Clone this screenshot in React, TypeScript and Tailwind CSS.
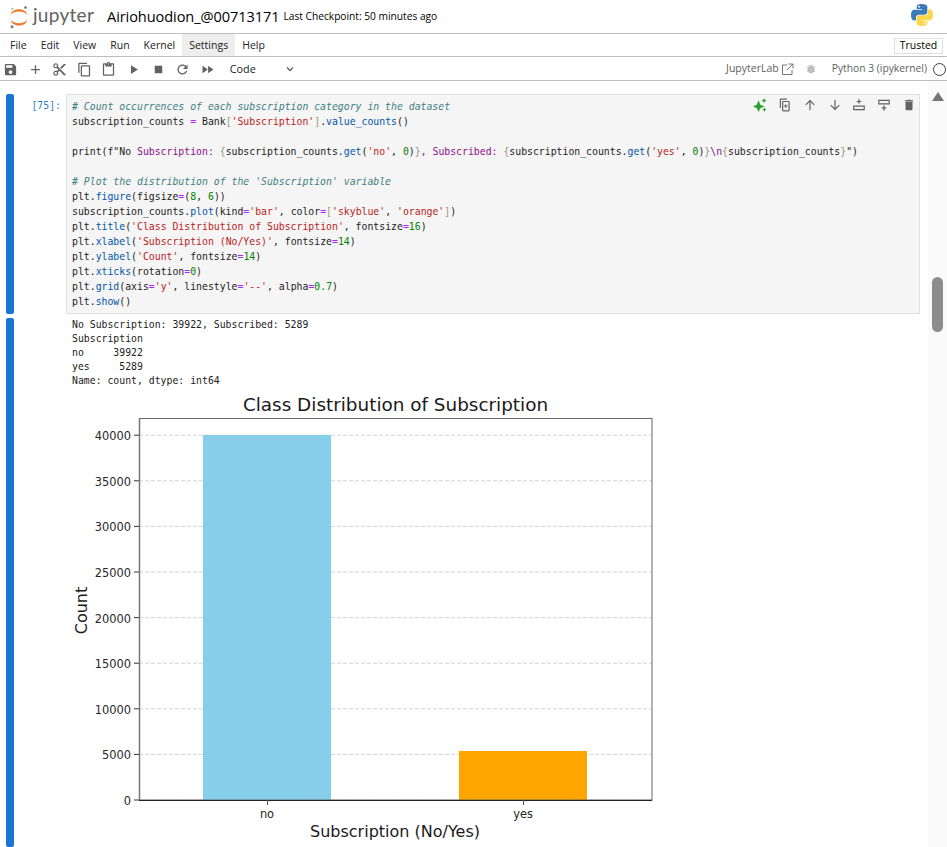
const UI_FONT = "font-['Open_Sans','Noto_Sans',sans-serif]";

const ICONS = {
  save: "M17 3H5a2 2 0 0 0-2 2v14a2 2 0 0 0 2 2h14c1.1 0 2-.9 2-2V7l-4-4zm-5 16c-1.66 0-3-1.34-3-3s1.34-3 3-3 3 1.34 3 3-1.34 3-3 3zm3-10H5V5h10v4z",
  add: "M19 13h-6v6h-2v-6H5v-2h6V5h2v6h6v2z",
  cut: "M9.64 7.64c.23-.5.36-1.05.36-1.64 0-2.21-1.79-4-4-4S2 3.79 2 6s1.79 4 4 4c.59 0 1.14-.13 1.64-.36L10 12l-2.36 2.36C7.14 14.13 6.59 14 6 14c-2.21 0-4 1.79-4 4s1.79 4 4 4 4-1.79 4-4c0-.59-.13-1.14-.36-1.64L12 14l7 7h3v-1L9.64 7.64zM6 8c-1.1 0-2-.89-2-2s.9-2 2-2 2 .89 2 2-.9 2-2 2zm0 12c-1.1 0-2-.89-2-2s.9-2 2-2 2 .89 2 2-.9 2-2 2zm6-7.5c-.28 0-.5-.22-.5-.5s.22-.5.5-.5.5.22.5.5-.22.5-.5.5zM19 3l-6 6 2 2 7-7V3h-3z",
  copy: "M16 1H4c-1.1 0-2 .9-2 2v14h2V3h12V1zm3 4H8c-1.1 0-2 .9-2 2v14c0 1.1.9 2 2 2h11c1.1 0 2-.9 2-2V7c0-1.1-.9-2-2-2zm0 16H8V7h11v14z",
  paste: "M19 2h-4.18C14.4.84 13.3 0 12 0c-1.3 0-2.4.84-2.82 2H5c-1.1 0-2 .9-2 2v16c0 1.1.9 2 2 2h14c1.1 0 2-.9 2-2V4c0-1.1-.9-2-2-2zm-7 0c.55 0 1 .45 1 1s-.45 1-1 1-1-.45-1-1 .45-1 1-1zm7 18H5V4h2v3h10V4h2v16z",
  run: "M8 5v14l11-7z",
  stop: "M6 6h12v12H6z",
  refresh: "M17.65 6.35C16.2 4.9 14.21 4 12 4c-4.42 0-7.99 3.58-7.99 8s3.57 8 7.99 8c3.73 0 6.84-2.55 7.73-6h-2.08c-.82 2.33-3.04 4-5.65 4-3.31 0-6-2.69-6-6s2.69-6 6-6c1.66 0 3.14.69 4.22 1.78L13 11h7V4l-2.35 2.35z",
  forward: "M4 18l8.5-6L4 6v12zm9-12v12l8.5-6L13 6z",
  sparkles: "M9.500 4l3 7.500L20 14.500l-7.500 3-3 6.500-3-6.500L0 14.500l6.500-3zM19 0l1.300 3.200L23.500 4.500l-3.200 1.300L19 9l-1.300-3.200L14.500 4.500l3.200-1.300zM19.500 16l1.200 2.800 2.800 1.200-2.800 1.200-1.200 2.800-1.200-2.800-2.800-1.200 2.800-1.200z",
  dup: "M15 1H5a2 2 0 0 0-2 2v14h2V3h10V1zm3 4H9a2 2 0 0 0-2 2v14a2 2 0 0 0 2 2h9a2 2 0 0 0 2-2V7a2 2 0 0 0-2-2zm0 16H9V7h9v14zm-3.500-8H14v-2.500h-1.500V13H10v1.500h2.500V17H14v-2.500h2.500V13z",
  up: "M12 3l8 8-1.400 1.400-5.600-5.600V21h-2V6.800l-5.600 5.600L4 11z",
  down: "M12 21l-8-8 1.400-1.400 5.600 5.600V3h2v14.200l5.600-5.600L20 13z",
  insertAbove: "M11 2h2v3h3v2h-3v3h-2V7H8V5h3zM2 13h20v8H2zM4 15v4h16v-4z",
  insertBelow: "M2 3h20v8H2zM4 5v4h16V5zM11 13h2v3h3v2h-3v4h-2v-4H8v-2h3z",
  trash: "M6 19a2 2 0 0 0 2 2h8a2 2 0 0 0 2-2V7H6v12zM19 4h-3.500l-1-1h-5l-1 1H5v2h14V4z",
};

const Icon = ({ d, size = 14, color = "#616161" }: { d: string; size?: number; color?: string }) => (
  <svg width={size} height={size} viewBox="0 0 24 24" fill={color} fillRule="evenodd" className="shrink-0">
    <path d={d} />
  </svg>
);

const JupyterMark = () => (
  <svg width="20" height="24" viewBox="0 0 20 24" className="shrink-0">
    <path d="M1.500 10.200C3 5.600 6.200 4.200 10 4.200s7 1.400 8.500 6C16.500 7.600 13.500 6.600 10 6.600S3.500 7.600 1.500 10.200z" fill="#f37726" />
    <path d="M1.500 14.600C3 19.200 6.200 20.600 10 20.600s7-1.400 8.500-6c-2 2.600-5 3.600-8.500 3.600s-6.500-1-8.500-3.600z" fill="#f37726" />
    <circle cx="16.500" cy="2.600" r="1.300" fill="#767677" />
    <circle cx="3" cy="21.800" r="1.500" fill="#767677" />
    <circle cx="3.400" cy="3.600" r="0.900" fill="#989798" />
  </svg>
);

const PYTHON_SNAKE =
  "M54.900 0C26.800 0 28.600 12.200 28.600 12.200v12.600h26.800v3.800H17.900S0 26.600 0 54.900c0 28.300 15.600 27.300 15.600 27.300h9.300V69.100s-.5-15.600 15.400-15.600h26.500s14.900.2 14.900-14.400V14.900S84 0 54.900 0zM40.100 8.500a4.800 4.800 0 1 1 0 9.600 4.800 4.800 0 0 1 0-9.600z";

const PythonLogo = () => (
  <svg width="22" height="22" viewBox="0 0 110 110" className="shrink-0">
    <path d={PYTHON_SNAKE} fill="#3b7cb8" />
    <path transform="rotate(180 55 55)" d={PYTHON_SNAKE} fill="#fdd64a" />
  </svg>
);

const Header = () => (
  <div className="flex items-center h-[34px] pl-[9px] pr-[14px] border-b border-[#bdbdbd]">
    <JupyterMark />
    <span className="ml-[4px] w-[74px] text-[19px] leading-none text-[#616161] font-['Lato',sans-serif] tracking-[0.3px] -mt-[5px]">
      jupyter
    </span>
    <span className="text-[14.600px] tracking-[-0.1px] text-black mt-[1px] whitespace-nowrap">Airiohuodion_@00713171</span>
    <span className="text-[10.200px] text-black ml-[4px] mt-[1px] whitespace-nowrap">Last Checkpoint: 50 minutes ago</span>
    <div className="ml-auto -mt-[4px]">
      <PythonLogo />
    </div>
  </div>
);

const MENU = ["File", "Edit", "View", "Run", "Kernel", "Settings", "Help"];

const MenuBar = () => (
  <div className="flex items-center h-[23px] pl-[3px] pr-[4px] border-b border-[#bdbdbd] text-[10.500px] text-[#212121]">
    {MENU.map((item) => (
      <div
        key={item}
        className={"h-full flex items-center px-[7px] pt-[2px] " + (item === "Settings" ? "bg-[#eeeeee]" : "")}
      >
        {item}
      </div>
    ))}
    <div className="ml-auto mt-[1px] h-[16px] w-[49px] flex items-center justify-center border border-[#e0e0e0] text-black">
      Trusted
    </div>
  </div>
);

const TOOLBAR_ICONS = [
  ICONS.save,
  ICONS.add,
  ICONS.cut,
  ICONS.copy,
  ICONS.paste,
  ICONS.run,
  ICONS.stop,
  ICONS.refresh,
  ICONS.forward,
];

const Toolbar = () => (
  <div className="flex items-center h-[24px] pl-[3px] pr-[1px] pt-[1px] border-b border-[#bdbdbd] text-[10.500px] text-[#424242]">
    <div className="flex items-center gap-[9.600px]">
      {TOOLBAR_ICONS.map((d, i) => (
        <Icon key={i} d={d} size={15} />
      ))}
    </div>
    <span className="ml-[15px] text-[#212121] text-[10.800px]">Code</span>
    <svg width="10" height="10" viewBox="0 0 10 10" className="ml-[29px]" fill="none" stroke="#616161" strokeWidth="1.300">
      <path d="M2 3.500l3 3 3-3" />
    </svg>
    <span className="ml-auto text-[#616161]">JupyterLab</span>
    <svg width="13" height="13" viewBox="0 0 13 13" className="ml-[2px]" fill="none" stroke="#757575" strokeWidth="1">
      <path d="M6 2H1.500v9.500H11V7M7.500 1H12v4.500M12 1L6 7" />
    </svg>
    <svg width="12" height="12" viewBox="0 0 24 24" className="ml-[11px]" fill="#bdbdbd">
      <path d="M20 8h-2.810a6 6 0 0 0-1.820-1.960L17 4.410 15.590 3l-2.170 2.170a6 6 0 0 0-2.830 0L8.410 3 7 4.410l1.620 1.630A6 6 0 0 0 6.810 8H4v2h2.090A6 6 0 0 0 6 11v1H4v2h2v1c0 .34.040.67.090 1H4v2h2.810a6 6 0 0 0 10.380 0H20v-2h-2.090c.05-.33.090-.66.090-1v-1h2v-2h-2v-1c0-.34-.040-.67-.090-1H20V8z" />
    </svg>
    <span className="ml-[15px] text-[10.300px] text-[#616161] whitespace-nowrap">Python 3 (ipykernel)</span>
    <div className="ml-[6px] w-[13px] h-[13px] rounded-full border border-[#424242]" />
  </div>
);

// tiny helpers for the highlighted code
const Cm = ({ children }: { children: string }) => <span className="text-[#408080] italic">{children}</span>;
const Op = ({ children }: { children: string }) => <span className="text-[#aa22ff]">{children}</span>;
const Str = ({ children }: { children: string }) => <span className="text-[#ba2121]">{children}</span>;
const Num = ({ children }: { children: string }) => <span className="text-[#008000]">{children}</span>;
const Fn = ({ children }: { children: string }) => <span className="text-[#0055aa]">{children}</span>;
const Fs = ({ children }: { children: string }) => <span className="text-[#8a0f8a]">{children}</span>;
const Br = ({ children }: { children: string }) => <span className="text-[#999977]">{children}</span>;

const CODE = [
  <Cm># Count occurrences of each subscription category in the dataset</Cm>,
  <>subscription_counts <Op>=</Op> Bank<Br>[</Br><Str>'Subscription'</Str><Br>]</Br>.<Fn>value_counts</Fn>()</>,
  <>&nbsp;</>,
  <>print(f"No <Fs>Subscription: </Fs><Br>{"{"}</Br>subscription_counts.<Fn>get</Fn>(<Str>'no'</Str>, <Num>0</Num>)<Br>{"}"}</Br><Fs>, Subscribed: </Fs><Br>{"{"}</Br>subscription_counts.<Fn>get</Fn>(<Str>'yes'</Str>, <Num>0</Num>)<Br>{"}"}</Br><Fs>\n</Fs><Br>{"{"}</Br>subscription_counts<Br>{"}"}</Br>")</>,
  <>&nbsp;</>,
  <Cm># Plot the distribution of the 'Subscription' variable</Cm>,
  <>plt.<Fn>figure</Fn>(figsize<Op>=</Op>(<Num>8</Num>, <Num>6</Num>))</>,
  <>subscription_counts.<Fn>plot</Fn>(kind<Op>=</Op><Str>'bar'</Str>, color<Op>=</Op><Br>[</Br><Str>'skyblue'</Str>, <Str>'orange'</Str><Br>]</Br>)</>,
  <>plt.<Fn>title</Fn>(<Str>'Class Distribution of Subscription'</Str>, fontsize<Op>=</Op><Num>16</Num>)</>,
  <>plt.<Fn>xlabel</Fn>(<Str>'Subscription (No/Yes)'</Str>, fontsize<Op>=</Op><Num>14</Num>)</>,
  <>plt.<Fn>ylabel</Fn>(<Str>'Count'</Str>, fontsize<Op>=</Op><Num>14</Num>)</>,
  <>plt.<Fn>xticks</Fn>(rotation<Op>=</Op><Num>0</Num>)</>,
  <>plt.<Fn>grid</Fn>(axis<Op>=</Op><Str>'y'</Str>, linestyle<Op>=</Op><Str>'--'</Str>, alpha<Op>=</Op><Num>0.7</Num>)</>,
  <>plt.<Fn>show</Fn>()</>,
];

const OUTPUT = [
  "No Subscription: 39922, Subscribed: 5289",
  "Subscription",
  "no     39922",
  "yes     5289",
  "Name: count, dtype: int64",
];

const CELL_TOOLS: [string, string][] = [
  [ICONS.sparkles, "#2ca02c"],
  [ICONS.dup, "#616161"],
  [ICONS.up, "#616161"],
  [ICONS.down, "#616161"],
  [ICONS.insertAbove, "#616161"],
  [ICONS.insertBelow, "#616161"],
  [ICONS.trash, "#616161"],
];

const MONO = "font-['DejaVu_Sans_Mono',monospace] text-[9.820px] whitespace-pre";

const InputCell = () => (
  <div className="flex">
    <div className="w-[8px] ml-[6px] rounded-[2px] bg-[#1976d2]" />
    <div className={"w-[47px] text-right pt-[4px] leading-[15px] text-[#307fc1] " + MONO}>[75]:</div>
    <div className="relative w-[854px] ml-[5px] bg-[#f5f5f5] border border-[#e0e0e0] pl-[5px] pt-[4px] pb-[4px]">
      {CODE.map((line, i) => (
        <div key={i} className={"h-[15px] leading-[15px] text-[#212121] " + MONO}>
          {line}
        </div>
      ))}
      <div className="absolute top-[3px] right-[3px] flex gap-[10.800px]">
        {CELL_TOOLS.map(([d, color], i) => (
          <Icon key={i} d={d} size={14} color={color} />
        ))}
      </div>
    </div>
  </div>
);

const Y_TICKS = [0, 5000, 10000, 15000, 20000, 25000, 30000, 35000, 40000];
const DEJAVU = "'DejaVu Sans', sans-serif";

const Chart = () => {
  const y = (v: number) => 800 - (v / 5000) * 45.6;
  const noTop = Math.floor(y(39922));
  const yesTop = Math.floor(y(5289));
  return (
    <svg width="600" height="459" viewBox="66 388 600 459" className="block">
      <text x="395.500" y="411" textAnchor="middle" fontSize="18.400" fontFamily={DEJAVU} fill="#1a1a1a">
        Class Distribution of Subscription
      </text>
      {Y_TICKS.map((v) => (
        <g key={v}>
          <line x1="139" x2="652" y1={y(v)} y2={y(v)} stroke="#d4d4d4" strokeDasharray="4 2" strokeWidth="1" />
          <line x1="134" x2="139" y1={y(v)} y2={y(v)} stroke="#333" strokeWidth="1" />
          <text x="131" y={y(v) + 5} textAnchor="end" fontSize="11.400" fontFamily={DEJAVU} fill="#262626">
            {v}
          </text>
        </g>
      ))}
      <rect x="203" y={noTop} width="128" height={800 - noTop} fill="#87ceeb" />
      <rect x="459" y={yesTop} width="128" height={800 - yesTop} fill="#ffa500" />
      <rect x="139.500" y="418.500" width="512.500" height="381.500" fill="none" stroke="#666" strokeWidth="1" />
      <line x1="139.500" x2="139.500" y1="418" y2="800" stroke="#777" strokeWidth="1.500" />
      <line x1="139" x2="652" y1="800.500" y2="800.500" stroke="#222" strokeWidth="1" />
      <line x1="267.500" x2="267.500" y1="800" y2="805" stroke="#555" />
      <line x1="523.500" x2="523.500" y1="800" y2="805" stroke="#555" />
      <text x="267" y="818" textAnchor="middle" fontSize="11.400" fontFamily={DEJAVU} fill="#262626">no</text>
      <text x="523" y="818" textAnchor="middle" fontSize="11.400" fontFamily={DEJAVU} fill="#262626">yes</text>
      <text x="395" y="837" textAnchor="middle" fontSize="16" fontFamily={DEJAVU} fill="#1a1a1a">
        Subscription (No/Yes)
      </text>
      <text
        transform="translate(87 610.500) rotate(-90)"
        textAnchor="middle"
        fontSize="16"
        fontFamily={DEJAVU}
        fill="#1a1a1a"
      >
        Count
      </text>
    </svg>
  );
};

const OutputCell = () => (
  <div className="flex flex-1 mt-[4px] min-h-0">
    <div className="w-[8px] ml-[6px] rounded-[2px] bg-[#1976d2]" />
    <div className="ml-[52px] min-w-0 flex-1">
      <div className="pl-[6px]">
        {OUTPUT.map((line) => (
          <div key={line} className={"h-[14px] leading-[14px] text-[#212121] " + MONO}>
            {line}
          </div>
        ))}
      </div>
      <Chart />
    </div>
  </div>
);

const Scrollbar = () => (
  <div className="w-[19px] bg-[#fafafa] flex flex-col items-center shrink-0">
    <div className="mt-[11px] w-0 h-0 border-x-[6.500px] border-x-transparent border-b-[9px] border-b-[#757575]" />
    <div className="mt-[176px] w-[11px] h-[55px] rounded-[6px] bg-[#8c8c8c]" />
  </div>
);

const App = () => {
  return (
    <div className={"w-[947px] h-[847px] overflow-hidden bg-white flex flex-col " + UI_FONT}>
      <Header />
      <MenuBar />
      <Toolbar />
      <div className="flex flex-1 min-h-0">
        <div className="flex-1 min-w-0 flex flex-col pt-[13px]">
          <InputCell />
          <OutputCell />
        </div>
        <Scrollbar />
      </div>
    </div>
  );
};

export default App;
